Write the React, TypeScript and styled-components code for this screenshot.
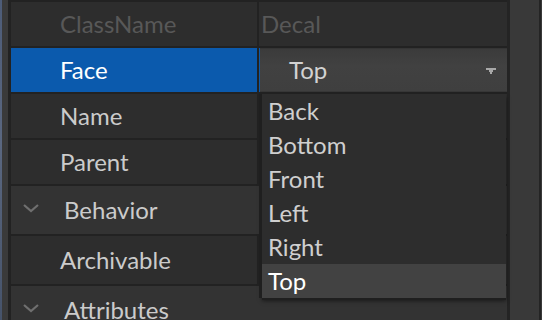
import React from 'react';
import styled, { createGlobalStyle } from 'styled-components';

const GlobalStyle = createGlobalStyle`
  *, *::before, *::after {
    box-sizing: border-box;
  }
  html, body {
    margin: 0;
    padding: 0;
    background: #2d2d2d;
    overflow: hidden;
  }
  body {
    font-family: Lato, "Open Sans", sans-serif;
  }
`;

const faces = ['Back', 'Bottom', 'Front', 'Left', 'Right', 'Top'];

export default function App() {
  return (
    <>
      <GlobalStyle />
      <Window>
        <Desktop />
        <Frame />
        <Grid>
          <HeadCell $pad={49}>ClassName</HeadCell>
          <HeadCell $pad={2}>Decal</HeadCell>

          <NameCell $selected>Face</NameCell>
          <ValueCell $selected>
            <Select>
              <span>Top</span>
              <Caret width="10" height="6" viewBox="0 0 10 6">
                <path d="M0 0H10V2H7V4H6V6H4V4H3V2H0Z" fill="#a8a8a8" />
              </Caret>
            </Select>
          </ValueCell>

          <NameCell>Name</NameCell>
          <ValueCell />
          <NameCell>Parent</NameCell>
          <ValueCell />

          <Section>
            <Chevron />
            Behavior
          </Section>

          <NameCell>Archivable</NameCell>
          <ValueCell />

          <Section>
            <Chevron />
            Attributes
          </Section>

          <Menu>
            {faces.map((f) => (
              <MenuItem key={f} $active={f === 'Top'}>
                {f}
              </MenuItem>
            ))}
          </Menu>
        </Grid>
        <Divider />
        <Scrollbar />
        <Divider $w={2} />
        <Frame $w={1} />
      </Window>
    </>
  );
}

function Chevron() {
  return (
    <ChevronSvg width="18" height="10" viewBox="0 0 18 10">
      <polyline
        points="2,2 9,8 16,2"
        fill="none"
        stroke="#6f6f6f"
        strokeWidth="2.2"
      />
    </ChevronSvg>
  );
}

const Window = styled.div`
  display: flex;
  width: 542px;
  height: 320px;
  overflow: hidden;
`;

const Desktop = styled.div`
  width: 2px;
  flex: none;
  background: linear-gradient(180deg, #4d5c78, #5a6780 45%, #46536a);
`;

const Frame = styled.div<{ $w?: number }>`
  width: ${(p) => p.$w ?? 6}px;
  flex: none;
  background: #3a3a3a;
`;

const Grid = styled.div`
  position: relative;
  flex: none;
  display: grid;
  grid-template-columns: 246px 248px;
  grid-template-rows: 44px 44px 44px 44px 48px 48px 48px;
  gap: 2px;
  padding: 2px 0 0 3px;
  background: #222222;
  align-content: start;
`;

const HeadCell = styled.div<{ $pad: number }>`
  display: flex;
  align-items: center;
  padding: 0 0 2px ${(p) => p.$pad}px;
  background: #2d2d2d;
  color: #585858;
  font-size: 24px;
`;

const NameCell = styled.div<{ $selected?: boolean }>`
  display: flex;
  align-items: center;
  padding: 0 0 2px 49px;
  background: ${(p) => (p.$selected ? '#0b5aad' : '#2d2d2d')};
  color: ${(p) => (p.$selected ? '#ffffff' : '#cbcbcb')};
  font-size: 24px;
`;

const ValueCell = styled.div<{ $selected?: boolean }>`
  display: flex;
  background: ${(p) => (p.$selected ? '#0b5aad' : '#2d2d2d')};
`;

const Select = styled.div`
  flex: 1;
  margin-left: 1px;
  display: flex;
  align-items: center;
  justify-content: space-between;
  padding: 0 11px 2px 29px;
  background: linear-gradient(180deg, #3b3b3b, #414141 40%, #3f3f3f);
  border-top: 1px solid #353535;
  border-bottom: 1px solid #383838;
  color: #d2d2d2;
  font-size: 24px;
`;

const Caret = styled.svg`
  display: block;
  margin-top: 4px;
`;

const Section = styled.div`
  grid-column: 1 / -1;
  display: flex;
  align-items: center;
  padding: 0 0 2px 11px;
  background: #333333;
  color: #cbcbcb;
  font-size: 24px;
`;

const ChevronSvg = styled.svg`
  display: block;
  margin: -2px 24px 0 0;
`;

const Menu = styled.div`
  position: absolute;
  left: 254px;
  top: 94px;
  width: 244px;
  display: flex;
  flex-direction: column;
  background: #2d2d2d;
  box-shadow: -3px 0 0 #1f1f1f, 0 2px 0 #1f1f1f, 0 3px 4px rgba(0, 0, 0, 0.5);
`;

const MenuItem = styled.div<{ $active?: boolean }>`
  height: 34px;
  display: flex;
  align-items: center;
  padding: 0 0 2px 6px;
  background: ${(p) => (p.$active ? '#424242' : 'transparent')};
  color: ${(p) => (p.$active ? '#ffffff' : '#cfcfcf')};
  font-size: 24px;
`;

const Divider = styled.div<{ $w?: number }>`
  width: ${(p) => p.$w ?? 3}px;
  flex: none;
  background: #242424;
`;

const Scrollbar = styled.div`
  width: 29px;
  flex: none;
  background: #393939;
`;
